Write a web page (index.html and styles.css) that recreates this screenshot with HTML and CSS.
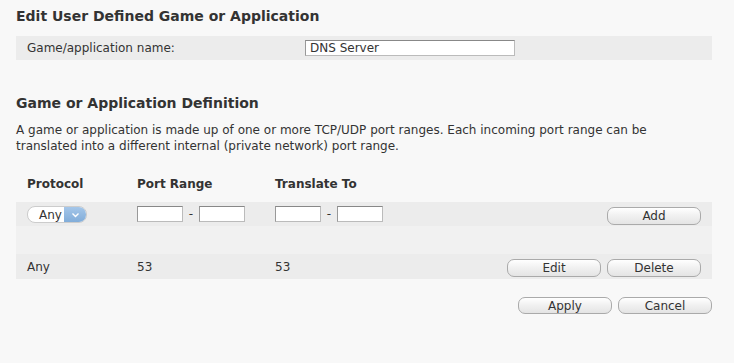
FILE: index.html
```html
<!DOCTYPE html>
<html><head><meta charset="utf-8">
<title>Edit User Defined Game or Application</title>
<link rel="stylesheet" href="styles.css">
</head>
<body>
<div class="cont">

<h1>Edit User Defined Game or Application</h1>
<div class="band namerow">
  <label for="appname">Game/application name:</label>
  <input type="text" id="appname" class="txt name" value="DNS Server">
</div>

<h1 class="sub">Game or Application Definition</h1>
<p class="desc">A game or application is made up of one or more TCP/UDP port ranges. Each incoming port range can be translated into a different internal (private network) port range.</p>

<div class="grid head">
  <div>Protocol</div><div>Port Range</div><div>Translate To</div><div></div>
</div>
<div class="grid band addrow">
  <div><span class="sel">Any<span class="arr"><svg width="9" height="6" viewBox="0 0 9 6"><path d="M1.5 1.5 L4.5 4.5 L7.5 1.5" fill="none" stroke="#fff" stroke-width="1.4"/></svg></span></span></div>
  <div><input class="txt port"><span class="dash">-</span><input class="txt port"></div>
  <div><input class="txt port"><span class="dash">-</span><input class="txt port"></div>
  <div class="btns"><button class="btn">Add</button></div>
</div>
<div class="gap"></div>
<div class="grid band datarow">
  <div>Any</div><div>53</div><div>53</div>
  <div class="btns"><button class="btn">Edit</button><button class="btn">Delete</button></div>
</div>

<div class="actions">
  <button class="btn">Apply</button><button class="btn">Cancel</button>
</div>

</div>
</body></html>
```
FILE: styles.css
```css
* {padding:0;margin:0;box-sizing:border-box;}
body {background:#f8f8f8;font-family:"DejaVu Sans",Verdana,sans-serif;color:#333;font-size:12px;}

.cont {width:696px;margin-left:16px;}
h1 {font-size:14px;font-weight:bold;color:#333;line-height:16px;padding-top:8px;height:36px;}
h1.sub {padding-top:0;height:auto;margin-top:35px;}

.band {background:#ececec;}
.namerow {display:flex;align-items:center;height:24px;padding-left:11px;}
.namerow label {width:278px;}

.txt {border:1px solid #bbb;border-top-color:#888;border-left-color:#999;background:#fff;font-family:inherit;font-size:12px;color:#333;height:16px;padding:0 4px;}
.txt.name {width:210px;}
.txt.port {width:46px;}

.desc {line-height:16px;margin-top:11px;padding-right:50px;}

.grid {display:grid;grid-template-columns:110px 138px 1fr 210px;align-items:center;padding-left:11px;}
.head {font-weight:bold;height:24px;margin-top:18px;margin-bottom:6px;}
.addrow {height:24px;}
.datarow {height:25px;}
.gap {height:28px;background:#f1f1f1;}
.dash {display:inline-block;width:16px;text-align:center;}

.sel {display:inline-flex;align-items:center;width:60px;height:17px;border:1px solid #ccc;border-radius:8px;background:#fff;overflow:hidden;padding-left:11px;margin-top:1px;}
.arr {margin-left:auto;width:22px;height:17px;background:linear-gradient(#a7c8ea,#7fabd8);display:flex;align-items:center;justify-content:center;}

.btns {display:flex;justify-content:flex-end;gap:6px;padding-right:11px;padding-top:3px;}
.btn {width:94px;height:18px;border:1px solid #aaa;border-radius:7px;background:linear-gradient(#fff,#f0f0f0 50%,#e4e4e4);font-family:inherit;font-size:12px;color:#333;line-height:16px;}

.actions {display:flex;justify-content:flex-end;gap:6px;margin-top:18px;}
.actions .btn {height:17px;}
```
